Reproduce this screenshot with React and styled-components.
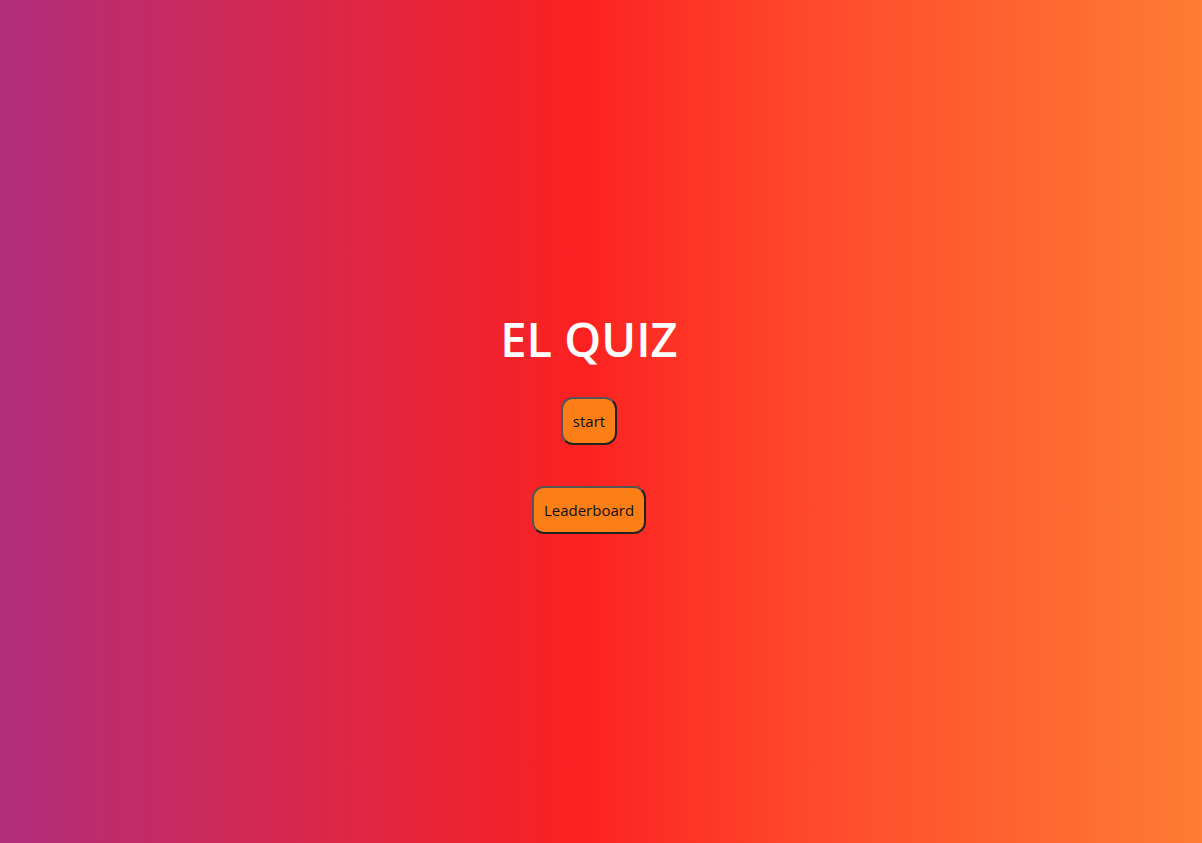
import React from 'react';
import styled, { createGlobalStyle } from 'styled-components';

const GlobalStyle = createGlobalStyle`
  html, body {
    margin: 0;
    padding: 0;
  }
  body {
    font-family: "Open Sans", "Noto Sans", sans-serif;
  }
`;

const Page = styled.div`
  width: 100%;
  height: 100vh;
  box-sizing: border-box;
  padding: 2px 24px 0 0;
  display: flex;
  flex-direction: column;
  align-items: center;
  justify-content: center;
  background: linear-gradient(to right, #b02e7c 0%, #fb2121 48%, #ff4a2c 68%, #fe7c34 100%);
`;

const Title = styled.h1`
  margin: 0 0 29px;
  color: #fff;
  font-size: 47px;
  font-weight: 650;
  line-height: 1.2;
`;

const Button = styled.button`
  font-family: "Open Sans", "Noto Sans", sans-serif;
  font-size: 15px;
  line-height: 20px;
  color: #111;
  background: #fc7e16;
  padding: 12px 10px;
  border: 2px solid #222;
  border-top-color: #555;
  border-left-color: #555;
  border-radius: 12px;
  cursor: pointer;
  & + & {
    margin-top: 41px;
  }
`;

const App = () => {
  return (
    <>
      <GlobalStyle />
      <Page>
        <Title>EL QUIZ</Title>
        <Button>start</Button>
        <Button>Leaderboard</Button>
      </Page>
    </>
  );
};

export default App;
